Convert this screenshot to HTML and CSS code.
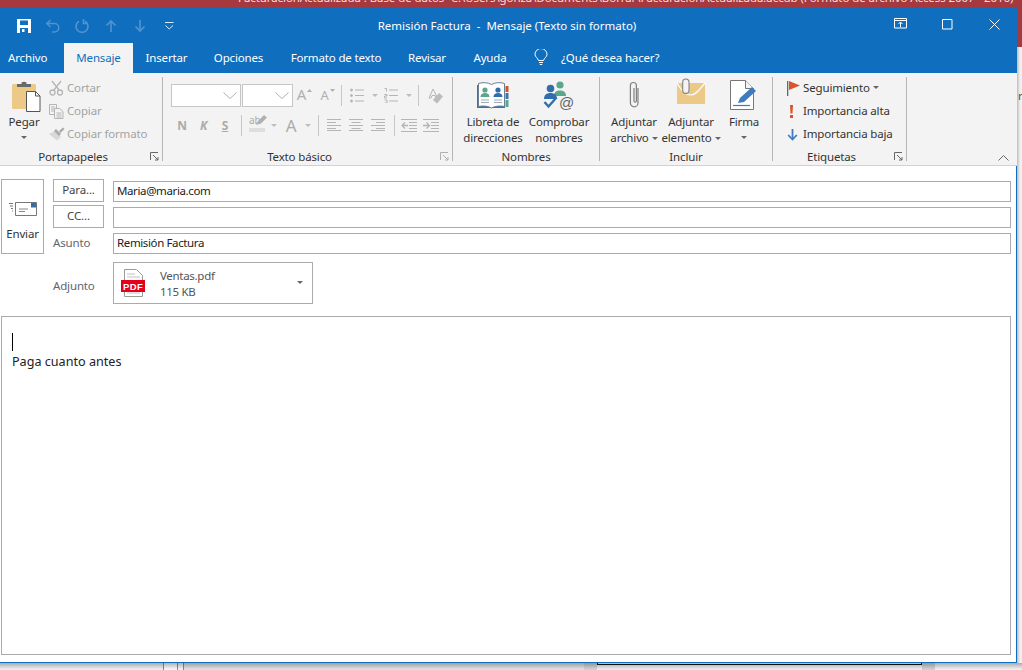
FILE: index.html
```html
<!DOCTYPE html>
<html lang="es">
<head>
<meta charset="utf-8">
<title>Remisión Factura - Mensaje (Texto sin formato)</title>
<link rel="stylesheet" href="styles.css">
</head>
<body>
<div class="backtitle"><span class="backtitle-text">FacturaciónActualizada : Base de datos- C:\Users\gonza\Documents\Borrar\FacturaciónActualizada.accdb (Formato de archivo Access 2007 - 2016)</span></div>
<div class="middle">
  <main class="window">
    <header class="titlebar">
      <div class="qat">
        <svg class="qi" width="16" height="16" viewBox="0 0 16 16"><path d="M1 1h14v14H1z" fill="#fff"/><path d="M4 2.500h8v4.500H4z" fill="#106ebe"/><path d="M4 10h8v5H4z" fill="#106ebe"/><path d="M6 11h2.500v3H6z" fill="#fff"/></svg>
        <svg class="qi" width="16" height="16" viewBox="0 0 16 16" fill="none" stroke="#4f93d0" stroke-width="1.600"><path d="M5.500 2 1.800 5.500 5.500 9"/><path d="M2 5.500h7.500a4 4 0 0 1 0 8.500H7"/></svg>
        <svg class="qi" width="16" height="16" viewBox="0 0 16 16" fill="none" stroke="#4f93d0" stroke-width="1.700"><path d="M11 3.200a6 6 0 1 1-6 0"/><path d="M9.500 1v4.500H14"/></svg>
        <svg class="qi" width="16" height="16" viewBox="0 0 16 16" fill="none" stroke="#4f93d0" stroke-width="1.700"><path d="M8 14V3"/><path d="M3.500 7.500 8 3l4.500 4.500"/></svg>
        <svg class="qi" width="16" height="16" viewBox="0 0 16 16" fill="none" stroke="#4f93d0" stroke-width="1.700"><path d="M8 2v11"/><path d="M3.500 8.500 8 13l4.500-4.500"/></svg>
        <svg class="qi" width="16" height="16" viewBox="0 0 16 16" fill="none" stroke="#dbe9f6" stroke-width="1"><path d="M4 4.500h8.500"/><path d="M4.500 7.500 8.200 11 12 7.500"/></svg>
      </div>
      <div class="doc-title">Remisión Factura &nbsp;-&nbsp; Mensaje (Texto sin formato)</div>
      <div class="winctl">
        <svg width="14" height="12" viewBox="0 0 14 12" fill="none" stroke="#fff"><path d="M.5 .5h12v9.500H.5z"/><path d="M.5 2.500h12"/><path d="M6.500 9V4.500M4.500 6l2-2 2 2"/></svg>
        <svg class="win-max" width="11" height="11" viewBox="0 0 11 11" fill="none" stroke="#fff"><path d="M.5 .5h9.500v9.500H.5z"/></svg>
        <svg class="win-close" width="11" height="11" viewBox="0 0 11 11" fill="none" stroke="#fff"><path d="M.5 .5l10 10M10.500 .5l-10 10"/></svg>
      </div>
    </header>

    <nav class="tabs">
      <span class="tab tab-file">Archivo</span>
      <span class="tab tab-active">Mensaje</span>
      <span class="tab">Insertar</span>
      <span class="tab">Opciones</span>
      <span class="tab">Formato de texto</span>
      <span class="tab">Revisar</span>
      <span class="tab">Ayuda</span>
      <span class="tab"><svg width="14" height="17" viewBox="0 0 14 17" fill="none" stroke="#fff"><path d="M4.500 11.500C4 9 1 8 1 5.500a6 6 0 0 1 12 0C13 8 10 9 9.500 11.500z"/><path d="M5 13.500h4M5.800 15.500h2.400"/></svg></span>
      <span class="tab tab-tell">¿Qué desea hacer?</span>
    </nav>

    <section class="ribbon">
      <div class="group g-clip">
        <div class="gbody clip-body">
          <div class="bigbtn pegar">
            <svg class="bigicon" width="30" height="31" viewBox="0 0 30 31"><rect x="0" y="3" width="24" height="25" rx="1.500" fill="#edc987"/><path d="M5 6V3h4.500V1.500Q12 0 14.500 1.500V3H19v3z" fill="#6a6a6a"/><path d="M14.500 10.500h9l4.500 4.500v15.500H14.500z" fill="#fff" stroke="#555"/><path d="M23.500 10.500V15H28" fill="none" stroke="#555"/></svg>
            <span class="biglabel">Pegar</span>
            <span class="caret caret-big"></span>
          </div>
          <div class="smallcol">
            <div class="srow off"><span class="sicon"><svg width="15" height="16" viewBox="0 0 15 16" fill="none" stroke="#b5b5b5" stroke-width="1.300"><circle cx="3.500" cy="12.500" r="2.500"/><circle cx="11" cy="12.500" r="2.500"/><path d="M10 10 3 1M5 10 12 1"/></svg></span>Cortar</div>
            <div class="srow off"><span class="sicon"><svg width="15" height="15" viewBox="0 0 15 15" fill="#f3f3f3" stroke="#b5b5b5"><path d="M.5 .5h7v10h-7z"/><path d="M2 3h4M2 5h3M2 7h3"/><path d="M5.500 4.500h5l3.500 3v7H5.500z"/><path d="M7.500 9h5M7.500 11h5M7.500 13h5"/></svg></span>Copiar</div>
            <div class="srow off"><span class="sicon sicon-brush"><svg width="17" height="14" viewBox="0 0 17 14"><path d="M1 7l6-3 6 6-4 3.500z" fill="#d8d8d8"/><path d="M6 4l5 5 2-2-5-5z" fill="#aaa"/><path d="M11 4l4-3.500 1.500 1.500-4 4z" fill="#aaa"/></svg></span>Copiar formato</div>
          </div>
        </div>
        <div class="glabel glabel-launch">Portapapeles</div>
        <svg class="launcher" width="9" height="9" viewBox="0 0 9 9" fill="none" stroke="#666"><path d="M.5 8V.5H8M3 3l5 5M8 5v3H5"/></svg>
      </div>

      <div class="group g-text">
        <div class="gbody text-body">
          <div class="trow trow-1">
            <span class="combo"><svg width="14" height="7" viewBox="0 0 14 7" fill="none" stroke="#b0b0b0"><path d="M.5 .5 7 6.500 13.500 .5"/></svg></span>
            <span class="combo combo-2"><svg width="14" height="7" viewBox="0 0 14 7" fill="none" stroke="#b0b0b0"><path d="M.5 .5 7 6.500 13.500 .5"/></svg></span>
            <span class="cell glyph-a">A<svg class="tiny" width="5" height="3" viewBox="0 0 5 3"><path d="M0 3 2.500 0 5 3z" fill="#b0b0b0"/></svg></span>
            <span class="cell glyph-a glyph-a2">A<svg class="tiny" width="5" height="3" viewBox="0 0 5 3"><path d="M0 0h5L2.500 3z" fill="#b0b0b0"/></svg></span>
            <span class="cell"><i class="sep"></i></span>
            <span class="cell"><svg width="14" height="15" viewBox="0 0 14 15" stroke="#b5b5b5" fill="#b5b5b5"><circle cx="1.500" cy="2" r="1"/><circle cx="1.500" cy="7.500" r="1"/><circle cx="1.500" cy="13" r="1"/><path d="M5 2h9M5 7.500h9M5 13h9"/></svg></span>
            <span class="cell"><span class="caret caret-off"></span></span>
            <span class="cell"><svg width="14" height="15" viewBox="0 0 14 15" stroke="#b5b5b5" fill="none"><path d="M.5 .500h2v3M.5 6.500h2.500V8H.5v2H3M.5 12h2.500v3H.5M5 2h9M5 7.500h9M5 13h9"/></svg></span>
            <span class="cell"><span class="caret caret-off"></span></span>
            <span class="cell"><i class="sep"></i></span>
            <span class="cell"><svg width="15" height="16" viewBox="0 0 15 16"><path d="M5 1 1 10h2l1-2.500h3L8 10h1.500z" fill="none" stroke="#b5b5b5"/><path d="M5 12l6-7 4 3.500-6 7z" fill="#bcbcbc"/></svg></span>
          </div>
          <div class="trow trow-2">
            <span class="cell fmt">N</span>
            <span class="cell fmt fmt-i">K</span>
            <span class="cell fmt fmt-u">S</span>
            <span class="cell"><i class="sep"></i></span>
            <span class="cell hl"><span class="hl-ab">ab</span><svg class="hl-pen" width="12" height="11" viewBox="0 0 12 11"><path d="M1 10l2-4 6-6 3 2.500-6 6z" fill="#b0b0b0"/></svg><i class="hl-bar"></i></span>
            <span class="cell"><span class="caret caret-off"></span></span>
            <span class="cell glyph-big">A</span>
            <span class="cell"><span class="caret caret-off"></span></span>
            <span class="cell"><i class="sep"></i></span>
            <span class="cell"><svg width="14" height="12" viewBox="0 0 14 12" stroke="#b5b5b5"><path d="M0 .5h14M0 3.500h9M0 6.500h14M0 9.500h9M0 11.500h14"/></svg></span>
            <span class="cell"><svg width="14" height="12" viewBox="0 0 14 12" stroke="#b5b5b5"><path d="M0 .5h14M2.500 3.500h9M0 6.500h14M2.500 9.500h9M0 11.500h14"/></svg></span>
            <span class="cell"><svg width="14" height="12" viewBox="0 0 14 12" stroke="#b5b5b5"><path d="M0 .5h14M5 3.500h9M0 6.500h14M5 9.500h9M0 11.500h14"/></svg></span>
            <span class="cell"><i class="sep"></i></span>
            <span class="cell"><svg width="16" height="13" viewBox="0 0 16 13" stroke="#b5b5b5" fill="none"><path d="M0 .5h16M8 3.500h8M8 6.500h8M8 9.500h8M0 12.500h16"/><path d="M7 6.500H1M4 3.500l-3 3 3 3" stroke-width="1.300"/></svg></span>
            <span class="cell"><svg width="16" height="13" viewBox="0 0 16 13" stroke="#b5b5b5" fill="none"><path d="M0 .5h16M8 3.500h8M8 6.500h8M8 9.500h8M0 12.500h16"/><path d="M0 6.500h6M3.500 3.500l3 3-3 3" stroke-width="1.300"/></svg></span>
          </div>
        </div>
        <div class="glabel glabel-launch">Texto básico</div>
        <svg class="launcher" width="9" height="9" viewBox="0 0 9 9" fill="none" stroke="#b0b0b0"><path d="M.5 8V.5H8M3 3l5 5M8 5v3H5"/></svg>
      </div>

      <div class="group g-names">
        <div class="gbody bigrow">
          <div class="bigbtn libreta">
            <svg class="bigicon" width="32" height="29" viewBox="0 0 32 29"><path d="M0 3h28v23H0z" fill="#3c73ab"/><path d="M1.500 1.500C6 0 11 .5 14.500 2.500 18 .5 23 0 27.500 1.500V24.500C23 23.500 18 24 14.500 26 11 24 6 23.500 1.500 24.500z" fill="#fff" stroke="#6a7f95"/><circle cx="8" cy="8" r="2.600" fill="#5aa78d"/><path d="M3.500 15c0-3 2-4 4.500-4s4.500 1 4.500 4z" fill="#5aa78d"/><circle cx="21" cy="8" r="2.600" fill="#2f6fae"/><path d="M16.500 15c0-3 2-4 4.500-4s4.500 1 4.500 4z" fill="#2f6fae"/><path d="M4 18h8M4 20.500h8M17 18h8M17 20.500h8" stroke="#9eaab6"/><path d="M28.500 4h3v6h-3z" fill="#d2532d"/><path d="M28.500 11h3v6h-3z" fill="#3c73ab"/><path d="M28.500 18h3v7h-3z" fill="#5aa78d"/></svg>
            <span class="biglabel">Libreta de<br>direcciones</span>
          </div>
          <div class="bigbtn comprobar">
            <svg class="bigicon" width="32" height="32" viewBox="0 0 32 32"><circle cx="17" cy="4" r="3.600" fill="#5aa78d"/><path d="M11 15c0-4 2.500-5.500 6-5.500s6 1.500 6 5.500z" fill="#5aa78d"/><circle cx="7.500" cy="7.500" r="3.800" fill="#2f6fae"/><path d="M1 18c0-4 2.500-6 6.500-6s6.500 2 6.500 6z" fill="#2f6fae"/><path d="M1.500 21l4 4.500 8-9" fill="none" stroke="#2f6fae" stroke-width="2.400"/><text class="at" x="16" y="27">@</text></svg>
            <span class="biglabel">Comprobar<br>nombres</span>
          </div>
        </div>
        <div class="glabel">Nombres</div>
      </div>

      <div class="group g-include">
        <div class="gbody bigrow">
          <div class="bigbtn b-file">
            <svg class="bigicon" width="13" height="28" viewBox="0 0 13 28" fill="none" stroke="#808080" stroke-width="1.200"><path d="M10 7v15a3.800 3.800 0 0 1-7.600 0V4.500a3 3 0 0 1 6 0V20a1.200 1.200 0 0 1-2.400 0V7"/></svg>
            <span class="biglabel">Adjuntar<br>archivo<span class="caret caret-inline"></span></span>
          </div>
          <div class="bigbtn b-item">
            <svg class="bigicon" width="28" height="27" viewBox="0 0 28 27"><path d="M0 5h28v21H0z" fill="#edc987"/><path d="M0 5c5 9 9 12 14 12s9-6 14-12" fill="none" stroke="#fff" stroke-width="1.200"/><path d="M10 9V3.500a3.500 3.500 0 0 0-7 0v9a3.500 3.500 0 0 0 7 0V5" transform="translate(3 1) scale(.9)" fill="#f3f3f3" stroke="#808080" stroke-width="1.200"/></svg>
            <span class="biglabel">Adjuntar<br>elemento<span class="caret caret-inline"></span></span>
          </div>
          <div class="bigbtn b-sign">
            <svg class="bigicon" width="28" height="30" viewBox="0 0 28 30"><path d="M.5 .5h15l8 8v21H.5z" fill="#fff" stroke="#777"/><path d="M15.500 .5v8h8" fill="#f3f3f3" stroke="#777"/><path d="M3 25.500h17" stroke="#3f7cbf" stroke-width="1.200"/><path d="M8 23l2-5 12-11 4 4-12 11z" fill="#3f7cbf"/></svg>
            <span class="biglabel">Firma</span>
            <span class="caret caret-big"></span>
          </div>
        </div>
        <div class="glabel">Incluir</div>
      </div>

      <div class="group g-tags">
        <div class="gbody tagcol">
          <div class="srow"><span class="ticon"><svg width="14" height="15" viewBox="0 0 14 15"><path d="M.5 0v15" stroke="#666" stroke-width="1.600"/><path d="M2 0l11 4.500L2 9z" fill="#d9532c"/></svg></span>Seguimiento<span class="caret caret-small"></span></div>
          <div class="srow"><span class="ticon"><svg width="14" height="13" viewBox="0 0 14 13"><path d="M3 0h3L5.500 8.500h-2z" fill="#d9532c"/><path d="M3 10h3v3H3z" fill="#d9532c"/></svg></span>Importancia alta</div>
          <div class="srow"><span class="ticon"><svg width="14" height="12" viewBox="0 0 14 12" fill="none" stroke="#3f7cbf" stroke-width="1.800"><path d="M5.500 0v10"/><path d="M1.200 6 5.500 10.500 9.800 6"/></svg></span>Importancia baja</div>
        </div>
        <div class="glabel glabel-launch">Etiquetas</div>
        <svg class="launcher" width="9" height="9" viewBox="0 0 9 9" fill="none" stroke="#666"><path d="M.5 8V.5H8M3 3l5 5M8 5v3H5"/></svg>
      </div>
      <svg class="collapse" width="11" height="6" viewBox="0 0 11 6" fill="none" stroke="#666"><path d="M.5 5.500 5.500 .5l5 5"/></svg>
    </section>

    <section class="compose">
      <div class="head">
        <button class="send">
          <svg width="28" height="15" viewBox="0 0 28 15"><path d="M6.500 1.500h21v13h-21z" fill="#fff" stroke="#777"/><path d="M22 2h5v4.500h-5z" fill="#2f6fae"/><path d="M10 8h9M10 10.500h6" stroke="#888"/><path d="M0 2.500h4M1 5h3M2 7.500h2M3 10h1" stroke="#777"/></svg>
          <span>Enviar</span>
        </button>
        <div class="fields">
          <button class="addr">Para...</button><div class="input">Maria@maria.com</div>
          <button class="addr">CC...</button><div class="input"></div>
          <div class="flabel">Asunto</div><div class="input input-subject">Remisión Factura</div>
        </div>
      </div>
      <div class="attach-row">
        <div class="flabel attach-label">Adjunto</div>
        <div class="attach">
          <svg width="24" height="28" viewBox="0 0 24 28"><path d="M3.500 .5h12l6 6v21h-18z" fill="#fff" stroke="#9a9a9a"/><path d="M6 5h8M6 8h13M6 21h13M6 24h13" stroke="#c0c0c0"/><path d="M0 11h24v12H0z" fill="#e2001a"/><text class="pdf" x="12" y="20.500">PDF</text></svg>
          <div class="attach-text"><div class="attach-name">Ventas.pdf</div><div class="attach-size">115 KB</div></div>
          <span class="caret caret-attach"></span>
        </div>
      </div>
      <div class="body">
        <i class="cursor"></i>
        <p class="body-text">Paga cuanto antes</p>
      </div>
    </section>
  </main>
  <aside class="gutter"><div class="gutter-red"></div><div class="gutter-rest"><span class="gutter-r">r</span></div></aside>
</div>
<footer class="under">
  <i class="u u1"></i><i class="u u2"></i><i class="u u3"></i><i class="u u4"></i><i class="u u5"></i><i class="u u6"></i><i class="u u7"></i><i class="u u8"></i>
</footer>
</body>
</html>
```

FILE: styles.css
```css
* { box-sizing: border-box; }
html, body { margin: 0; padding: 0; }
body {
  width: 1022px;
  height: 670px;
  overflow: hidden;
  background: #efefef;
  font-family: "Noto Sans", "Open Sans", sans-serif;
  font-size: 11.5px;
  letter-spacing: -.15px;
  color: #333;
  display: flex;
  flex-direction: column;
}
button { font: inherit; color: inherit; padding: 0; letter-spacing: inherit; }
i { display: block; font-style: normal; }

.backtitle { height: 8px; background: #a5393d; overflow: hidden; padding-left: 238px; color: #f4dede; white-space: nowrap; font-size: 11.5px; letter-spacing: -.08px; line-height: 16px; flex: none; }
.backtitle-text { display: block; margin-top: -10px; }

.middle { height: 655px; display: flex; flex: none; }
.window { width: 1017px; display: flex; flex-direction: column; flex: none; }

.titlebar { height: 35px; background: #106ebe; color: #fff; display: grid; grid-template-columns: 330px 1fr 330px; align-items: center; flex: none; }
.qat { display: flex; align-items: center; padding-left: 16px; gap: 13px; }
.doc-title { text-align: center; margin-right: 3px; letter-spacing: 0; white-space: nowrap; }
.winctl { display: flex; align-items: center; justify-content: flex-end; padding-right: 17px; padding-bottom: 3px; }
.win-max { margin-left: 34px; }
.win-close { margin-left: 36px; }

.tabs { height: 30px; background: #106ebe; color: #fff; display: grid; grid-template-columns: 64px 69px 67px 77px 118px 64px 62px 40px auto; flex: none; }
.tab { display: flex; align-items: center; justify-content: center; white-space: nowrap; padding-bottom: 1px; }
.tab-file { justify-content: flex-start; padding-left: 8px; }
.tab-active { background: #f3f3f3; color: #106ebe; }
.tab-tell { justify-content: flex-start; }

.ribbon { height: 93px; background: #f3f3f3; border-bottom: 1px solid #d2d2d2; display: flex; position: relative; padding-top: 4px; flex: none; }
.group { height: 84px; border-right: 1px solid #b6b6b6; display: flex; flex-direction: column; position: relative; flex: none; }
.g-clip { width: 163px; }
.g-text { width: 290px; }
.g-names { width: 147px; }
.g-include { width: 173px; }
.g-tags { width: 134px; }
.gbody { height: 72px; display: flex; flex: none; }
.glabel { height: 12px; line-height: 16px; text-align: center; white-space: nowrap; }
.glabel-launch { padding-right: 16px; }
.launcher { position: absolute; right: 3px; bottom: 0; }
.collapse { position: absolute; right: 8px; bottom: 4px; }

.bigbtn { display: flex; flex-direction: column; align-items: center; flex: none; line-height: 16px; text-align: center; white-space: nowrap; }
.biglabel { display: block; }
.bigicon { flex: none; }
.caret { display: inline-block; width: 0; height: 0; border-left: 3px solid transparent; border-right: 3px solid transparent; border-top: 3px solid #666; }
.caret-big { margin-top: 6px; }
.caret-inline { margin-left: 3px; vertical-align: 2px; }
.caret-small { margin-left: 3px; vertical-align: 2px; }
.caret-off { border-top-color: #bdbdbd; }

.pegar { width: 48px; }
.pegar .bigicon { margin: 4px 0 2px 6px; }
.smallcol { display: flex; flex-direction: column; padding-left: 1px; }
.srow { height: 23px; display: flex; align-items: center; white-space: nowrap; }
.srow.off { color: #a3a3a3; }
.sicon { width: 18px; display: flex; align-items: center; flex: none; padding-top: 1px; }
.sicon-brush { margin-left: -1px; width: 19px; }
.srow { padding-bottom: 2px; }

.text-body { flex-direction: column; padding: 7px 0 0 8px; gap: 8px; }
.trow { display: grid; height: 22px; align-items: center; }
.trow-1 { grid-template-columns: 71px 51px 23px 23px 4px 27px 10px 21px 16px 2px 32px; }
.trow-2 { grid-template-columns: 22px 21px 22px 10px 22px 12px 22px 12px 8px 24px 20px 24px 8px 21px 23px; }
.cell { display: flex; align-items: center; justify-content: center; height: 22px; position: relative; }
.sep { width: 1px; height: 21px; background: #c6c6c6; flex: none; }
.combo { height: 23px; background: #fff; border: 1px solid #c6c6c6; display: flex; align-items: center; justify-content: flex-end; padding-right: 3px; margin-right: 1px; }
.combo-2 { margin-right: 0; }
.glyph-a { color: #b0b0b0; font-size: 15px; align-items: flex-end; padding-bottom: 3px; }
.glyph-a2 { font-size: 13px; }
.tiny { margin-bottom: 12px; margin-left: 1px; }
.fmt { color: #ababab; font-weight: 700; font-size: 12px; }
.fmt-i { font-style: italic; }
.fmt-u { text-decoration: underline; }
.glyph-big { color: #ababab; font-size: 17px; }
.hl { display: block; }
.hl-ab { position: absolute; left: 3px; top: 0; color: #ababab; font-size: 10px; line-height: 13px; }
.hl-pen { position: absolute; left: 9px; top: 1px; }
.hl-bar { position: absolute; left: 3px; top: 14px; width: 16px; height: 4px; background: #dedede; }

.bigrow { align-items: flex-start; }
.libreta { width: 80px; padding-top: 5px; }
.libreta .biglabel { margin-top: 3px; }
.comprobar { width: 52px; padding-top: 4px; }
.comprobar .biglabel { margin-top: 1px; }
.g-include .bigrow { padding-left: 4px; }
.b-file { width: 60px; padding-top: 4px; }
.b-file .biglabel { margin-top: 5px; }
.b-item { width: 54px; padding-top: 1px; }
.b-item .biglabel { margin-top: 9px; }
.b-sign { width: 52px; padding-top: 3px; }
.b-sign .biglabel { margin-top: 4px; }

.tagcol { flex-direction: column; padding-left: 14px; }
.ticon { width: 16px; display: flex; align-items: center; flex: none; padding-top: 2px; }

.at { font-family: "Liberation Sans", sans-serif; font-size: 15px; letter-spacing: 0; fill: #666; }
.pdf { font-family: "Liberation Sans", sans-serif; font-size: 9.500px; font-weight: 700; fill: #fff; text-anchor: middle; letter-spacing: .4px; }

.compose { flex: 1; min-height: 0; background: #fff; border-right: 1px solid #106ebe; border-bottom: 1px solid #106ebe; padding: 13px 5px 7px 1px; display: flex; flex-direction: column; }
.head { display: flex; align-items: flex-start; flex: none; }
.send { width: 43px; height: 75px; background: #fff; border: 1px solid #ababab; display: flex; flex-direction: column; align-items: center; padding-top: 21px; gap: 10px; flex: none; }
.send span { line-height: 16px; }
.fields { flex: 1; margin-left: 9px; display: grid; grid-template-columns: 51px 1fr; column-gap: 9px; grid-template-rows: 23px 23px 23px; row-gap: 3px; }
.fields > :nth-child(5), .fields > :nth-child(6) { margin-top: 2px; }
.addr { background: #fff; border: 1px solid #ababab; text-align: center; color: #444; padding-bottom: 2px; }
.input { border: 1px solid #ababab; height: 21px; align-self: end; padding-left: 3px; line-height: 17px; color: #222; white-space: nowrap; letter-spacing: -.38px; }
.flabel { color: #62666e; line-height: 19px; }
.attach-row { display: flex; margin: 8px 0 0 52px; height: 42px; flex: none; }
.attach-label { width: 60px; line-height: 48px; }
.attach { width: 200px; height: 42px; border: 1px solid #ababab; display: flex; align-items: center; padding: 0 9px 0 7px; }
.attach-text { margin-left: 15px; flex: 1; line-height: 16px; color: #555; padding-top: 2px; letter-spacing: -.3px; }
.caret-attach { flex: none; margin-top: -2px; }
.body { flex: 1; margin-top: 12px; border: 1px solid #ababab; padding: 16px 10px 0; }
.cursor { width: 1px; height: 18px; background: #000; }
.body-text { margin: 2px 0 0; font-size: 12.600px; letter-spacing: 0; line-height: 18px; color: #222; }

.gutter { flex: 1; display: flex; flex-direction: column; }
.gutter-red { height: 39px; background: #a5393d; flex: none; }
.gutter-rest { flex: 1; background: linear-gradient(90deg, #bdbdbd, #f0f0f0 3px); padding: 41px 0 0 1px; color: #555; overflow: hidden; line-height: 16px; }

.under { flex: 1; display: flex; position: relative; background: #eaeaea; }
.under::after { content: ""; position: absolute; inset: 0; background: linear-gradient(180deg, rgba(0,0,0,.28), rgba(0,0,0,0) 6px); }
.u { height: 100%; flex: none; }
.u1 { width: 163px; background: #ececec; }
.u2 { width: 14px; background: #f6f6f6; border-left: 1px solid #8a8a8a; }
.u3 { width: 6px; background: #f0f0f0; border-left: 1px solid #8a8a8a; }
.u4 { width: 401px; background: #dedede; border-left: 1px solid #8a8a8a; }
.u5 { width: 13px; background: #cfcfcf; }
.u6 { width: 325px; background: #fff; height: 2px; border: 1px solid #111; border-top: 0; }
.u7 { width: 13px; background: #cfcfcf; }
.u8 { flex: 1; background: #eeeeee; }
```
